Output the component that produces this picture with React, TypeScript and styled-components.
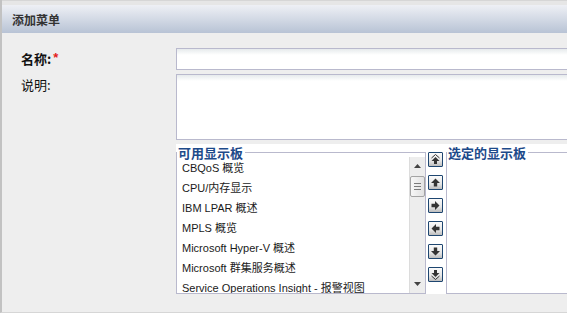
import React from "react";
import styled, { createGlobalStyle } from "styled-components";

const GlobalStyle = createGlobalStyle`
  html, body {
    margin: 0;
    padding: 0;
    background: #ffffff;
  }
  body {
    font-family: "Liberation Sans", "Noto Sans CJK SC", sans-serif;
  }
`;

const boards = [
  "CBQoS 概览",
  "CPU/内存显示",
  "IBM LPAR 概述",
  "MPLS 概览",
  "Microsoft Hyper-V 概述",
  "Microsoft 群集服务概述",
  "Service Operations Insight - 报警视图",
];

type ArrowKind = "top" | "up" | "right" | "left" | "down" | "bottom";
const moves: ArrowKind[] = ["top", "up", "right", "left", "down", "bottom"];

function ArrowIcon({ kind }: { kind: ArrowKind }) {
  // base arrow points up, rotated for the others
  const rotate =
    kind === "right" ? 90 : kind === "down" || kind === "bottom" ? 180 : kind === "left" ? 270 : 0;
  const double = kind === "top" || kind === "bottom";
  return (
    <svg width="13" height="13" viewBox="0 0 13 13">
      <g transform={`rotate(${rotate} 6.5 6.5)`}>
        {double ? (
          <>
            <path d="M2.5 5 L6.5 1.5 L10.5 5" fill="none" stroke="#333" strokeWidth="1" />
            <path d="M6.5 4 L10.5 8 L8 8 L8 11 L5 11 L5 8 L2.5 8 Z" fill="#333" />
          </>
        ) : (
          <path d="M6.5 2.5 L11 7 L8.2 7 L8.2 10.5 L4.8 10.5 L4.8 7 L2 7 Z" fill="#333" />
        )}
      </g>
    </svg>
  );
}

export default function App() {
  return (
    <Root>
      <GlobalStyle />
      <Frame>
        <TopStrip />
        <Header>添加菜单</Header>
        <Body>
          <Label $bold>
            名称:<Required>*</Required>
          </Label>
          <TextInput type="text" />
          <Label>说明:</Label>
          <TextArea />
          <span />
          <Picker>
            <Group $width="250px">
              <Legend>可用显示板</Legend>
              <GroupContent>
                <List>
                  {boards.map((b) => (
                    <Item key={b}>{b}</Item>
                  ))}
                </List>
                <Scrollbar>
                  <ScrollArrow>
                    <svg width="7" height="4" viewBox="0 0 7 4">
                      <path d="M0 4 L3.5 0 L7 4 Z" fill="#444" />
                    </svg>
                  </ScrollArrow>
                  <Thumb>
                    <Grip />
                    <Grip />
                    <Grip />
                  </Thumb>
                  <Spacer />
                  <ScrollArrow>
                    <svg width="7" height="4" viewBox="0 0 7 4">
                      <path d="M0 0 L7 0 L3.5 4 Z" fill="#444" />
                    </svg>
                  </ScrollArrow>
                </Scrollbar>
              </GroupContent>
            </Group>
            <MoveColumn>
              {moves.map((m) => (
                <MoveButton key={m}>
                  <ArrowIcon kind={m} />
                </MoveButton>
              ))}
            </MoveColumn>
            <Group $grow>
              <Legend>选定的显示板</Legend>
            </Group>
          </Picker>
        </Body>
      </Frame>
    </Root>
  );
}

const Root = styled.div`
  width: 567px;
  height: 317px;
  overflow: hidden;
  background: #ffffff;
`;

const Frame = styled.div`
  height: 312px;
  border-left: 2px solid #c2c2c2;
  border-bottom: 1px solid #d6d6d6;
  display: flex;
  flex-direction: column;
  background: #eeeeee;
`;

const TopStrip = styled.div`
  height: 5px;
  background: #e6e6e6;
  border-top: 1px solid #d6d6d6;
  box-sizing: border-box;
`;

const Header = styled.div`
  height: 28px;
  display: flex;
  align-items: center;
  padding-left: 10px;
  padding-top: 1px;
  box-sizing: border-box;
  background: linear-gradient(#eef0f5, #b8c3d5);
  font-family: "Noto Sans CJK SC", sans-serif;
  font-size: 12px;
  font-weight: bold;
  color: #333333;
`;

const Body = styled.div`
  flex: 1;
  display: grid;
  grid-template-columns: 174px 1fr;
  grid-auto-rows: auto;
  row-gap: 4px;
  padding-top: 15px;
  align-content: start;
`;

const Label = styled.div<{ $bold?: boolean }>`
  padding-left: 19px;
  font-family: "Noto Sans CJK SC", sans-serif;
  font-size: 13px;
  line-height: 20px;
  padding-top: 1px;
  font-weight: ${(p) => (p.$bold ? "bold" : "normal")};
  color: #111111;
`;

const Required = styled.span`
  color: #e41b1b;
  font-family: "Liberation Sans", sans-serif;
  font-weight: bold;
  font-size: 13px;
  margin-left: 2px;
  position: relative;
  top: -2px;
`;

const fieldLook = `
  box-sizing: border-box;
  width: calc(100% + 6px);
  margin: 0;
  border: 1px solid #b9b9cd;
  border-radius: 0;
  background: linear-gradient(#e6eaec, #ffffff 6px);
  outline: none;
  font-family: "Liberation Sans", sans-serif;
  font-size: 12px;
`;

const TextInput = styled.input`
  ${fieldLook}
  height: 22px;
  padding: 0 4px;
`;

const TextArea = styled.textarea`
  ${fieldLook}
  display: block;
  height: 66px;
  resize: none;
  padding: 2px 4px;
`;

const Picker = styled.div`
  display: flex;
  height: 150px;
  background: #ffffff;
  margin-right: -6px;
`;

const Group = styled.fieldset<{ $width?: string; $grow?: boolean }>`
  margin: 0;
  padding: 0;
  min-width: 0;
  box-sizing: border-box;
  height: 150px;
  width: ${(p) => p.$width ?? "auto"};
  flex: ${(p) => (p.$grow ? "1" : "none")};
  border: 1px solid #b9b9cd;
`;

const Legend = styled.legend`
  padding: 0 2px 0 1px;
  margin-left: 0;
  font-family: "Noto Sans CJK SC", sans-serif;
  font-size: 13px;
  line-height: 17px;
  font-weight: bold;
  color: #1d4a8a;
`;

const GroupContent = styled.div`
  display: flex;
  margin-top: -4px;
  height: 136px;
`;

const List = styled.div`
  flex: 1;
  overflow: hidden;
  padding-top: 1px;
`;

const Item = styled.div`
  height: 20px;
  line-height: 20px;
  padding-left: 5px;
  white-space: nowrap;
  font-family: "Liberation Sans", "Noto Sans CJK SC", sans-serif;
  font-size: 11px;
  color: #1a1a1a;
`;

const Scrollbar = styled.div`
  width: 16px;
  display: flex;
  flex-direction: column;
  align-items: center;
  background: #ededed;
  border-left: 1px solid #dcdcdc;
  box-sizing: border-box;
`;

const ScrollArrow = styled.div`
  height: 18px;
  display: flex;
  align-items: center;
  justify-content: center;
`;

const Thumb = styled.div`
  margin-top: 1px;
  width: 15px;
  height: 21px;
  box-sizing: border-box;
  border: 1px solid #a4a4a4;
  border-radius: 2px;
  background: linear-gradient(90deg, #f7f7f7, #e2e2e2);
  display: flex;
  flex-direction: column;
  align-items: center;
  justify-content: center;
  gap: 2px;
`;

const Grip = styled.div`
  width: 7px;
  height: 1px;
  background: #7a7a7a;
`;

const Spacer = styled.div`
  flex: 1;
`;

const MoveColumn = styled.div`
  width: 20px;
  display: flex;
  flex-direction: column;
  gap: 8px;
  padding: 8px 0 0 2px;
  box-sizing: border-box;
`;

const MoveButton = styled.div`
  width: 15px;
  height: 15px;
  box-sizing: border-box;
  border: 1px solid #1e4670;
  border-radius: 1px;
  background: linear-gradient(#fbfbfb, #e6e6e6 60%, #bdbdbd);
  display: flex;
  align-items: center;
  justify-content: center;
`;
